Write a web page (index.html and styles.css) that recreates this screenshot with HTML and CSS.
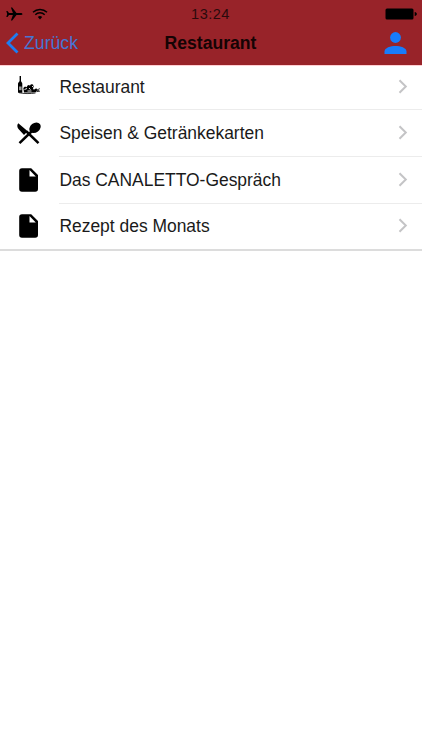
FILE: index.html
```html
<!DOCTYPE html>
<html lang="de">
<head>
  <meta charset="UTF-8" />
  <meta name="viewport" content="width=device-width, initial-scale=1.0"/>
  <title>Restaurant</title>
  <link rel="stylesheet" href="styles.css">
</head>
<body>
  <header>
    <div class="status">
      <div class="status-left">
        <svg class="plane" width="17" height="14" viewBox="0 0 17 14"><path d="M16.500 7c0-.7-.9-1.100-1.900-1.100H10.500L6.200 .6H4.900l2 5.300H3L1.500 4H.3l.9 3-.9 3h1.200L3 8.100h3.900l-2 5.300h1.300l4.300-5.300h4.100c1 0 1.900-.4 1.900-1.100z"/></svg>
        <svg class="wifi" width="16" height="12" viewBox="0 0 16 12"><path d="M1 4.300a10 10 0 0 1 14 0M3.300 6.700a6.800 6.800 0 0 1 9.400 0" fill="none" stroke="#000" stroke-width="1.500"/><path d="M5.800 9a3.400 3.400 0 0 1 4.400 0L8 11.400z"/></svg>
      </div>
      <span class="time">13:24</span>
      <svg class="battery" width="32" height="12" viewBox="0 0 32 12"><rect x=".5" y=".5" width="28" height="11" rx="1.500"/><path d="M29.700 4c1.400.3 2.100 1 2.100 2s-.7 1.700-2.100 2z"/></svg>
    </div>
    <nav class="navbar">
      <a class="back" href="#">
        <svg width="13" height="22" viewBox="0 0 13 22"><path d="M11.500 1.500L2 11l9.500 9.500" fill="none" stroke="#1d7df2" stroke-width="2.800"/></svg>
        <span>Zurück</span>
      </a>
      <h1>Restaurant</h1>
      <a class="user" href="#">
        <svg width="23" height="22" viewBox="0 0 22 22"><circle cx="11" cy="5.500" r="5.400"/><path d="M0 22v-2.500C0 15.800 6 14 11 14s11 1.800 11 5.500V22z"/></svg>
      </a>
    </nav>
  </header>

  <ul class="menu">
    <li>
      <div class="icon">
        <svg class="bottle" width="24" height="20" viewBox="0 0 24 20"><path d="M2.600 0h1.400v4.700c0 1.100 1.300 1.600 1.300 3v9H1V7.700c0-1.400 1.600-1.900 1.600-3z"/><path d="M2 10.500h2.600v3.700H2z" fill="#999"/><path d="M6.300 12l1.700-1.500 1.500.8 1.500-2.300 2 .5 1-1.300 2 .2.800 2.500-1 1 1 1.800 2.500-1.500 1 1.800-1.500 2.200-3 .3H7z"/><path d="M2 16.700c4 1.100 12 1.100 16.500.3M20 13l1 2 1.400-2.800M19.500 15.700l3.500-.6" fill="none" stroke="#000" stroke-width=".8"/><path d="M7.500 13.500l2.500-1M12 12l1.500 1.700M10.500 15h4M15 11l1-1" stroke="#fff" stroke-width=".9"/></svg>
      </div>
      <a href="#">Restaurant <svg class="arrow" width="10" height="15" viewBox="0 0 10 15"><path d="M1.500 1.200l6.300 6.300-6.300 6.300"/></svg></a>
    </li>
    <li>
      <div class="icon">
        <svg width="24" height="23" viewBox="0 0 24 23"><path d="M1.300 1.200C-.3 3 .2 5.500 1.500 6.900l5.500 6 3.700-3.700z"/><path d="M2.500 21.200L15.500 8.500M9.500 9.500l12 11.700" fill="none" stroke="#000" stroke-width="2.500"/><ellipse cx="18" cy="5.800" rx="6.200" ry="4.700" transform="rotate(-38 18 5.800)"/></svg>
      </div>
      <a href="#">Speisen &amp; Getränkekarten <svg class="arrow" width="10" height="15" viewBox="0 0 10 15"><path d="M1.500 1.200l6.300 6.300-6.300 6.300"/></svg></a>
    </li>
    <li>
      <div class="icon">
        <svg width="20" height="24" viewBox="0 0 20 24"><path fill-rule="evenodd" d="M3 .2h9.200L19 7v14a2.800 2.800 0 0 1-2.800 2.800H3A2.800 2.800 0 0 1 .2 21V3A2.800 2.800 0 0 1 3 .2zM10.500 2v6.500h6.300z"/></svg>
      </div>
      <a href="#">Das CANALETTO-Gespräch <svg class="arrow" width="10" height="15" viewBox="0 0 10 15"><path d="M1.500 1.200l6.300 6.300-6.300 6.300"/></svg></a>
    </li>
    <li>
      <div class="icon">
        <svg width="20" height="24" viewBox="0 0 20 24"><path fill-rule="evenodd" d="M3 .2h9.200L19 7v14a2.800 2.800 0 0 1-2.800 2.800H3A2.800 2.800 0 0 1 .2 21V3A2.800 2.800 0 0 1 3 .2zM10.500 2v6.500h6.300z"/></svg>
      </div>
      <a href="#">Rezept des Monats <svg class="arrow" width="10" height="15" viewBox="0 0 10 15"><path d="M1.500 1.200l6.300 6.300-6.300 6.300"/></svg></a>
    </li>
  </ul>
</body>
</html>
```
FILE: styles.css
```css
* {
  box-sizing: border-box;
}

body {
  font-family: "Liberation Sans", Arial, sans-serif;
  margin: 0;
  background: #fff;
  color: #1a1a1a;
}

svg {
  display: block;
}

a {
  color: inherit;
  text-decoration: none;
}

header {
  height: 66px;
  background: #982329;
  border-bottom: 1px solid #ffcfd3;
}

.status {
  display: grid;
  grid-template-columns: 1fr auto 1fr;
  align-items: center;
  height: 22px;
  padding: 5px 5px 0 4px;
}

.status-left {
  display: flex;
  align-items: center;
  gap: 9px;
  padding-left: 2px;
}

.time {
  font-size: 14.5px;
  line-height: 17px;
  letter-spacing: 0.5px;
  margin-top: 1px;
  color: #2a0a0c;
}

.battery {
  justify-self: end;
}

.navbar {
  display: grid;
  grid-template-columns: 1fr auto 1fr;
  align-items: center;
  height: 42px;
  padding: 0 15px 0 6px;
}

.back {
  display: flex;
  align-items: center;
  gap: 5px;
  font-size: 17.7px;
  color: #4676d3;
}

h1 {
  margin: 0 -4px 0 4px;
  font-size: 17.6px;
  color: #150304;
}

.user {
  justify-self: end;
  fill: #187cfb;
}

.menu {
  list-style: none;
  margin: 0;
  padding: 0;
  border-bottom: 2px solid #dcdcdc;
}

.menu li {
  display: flex;
  height: 47px;
  padding-left: 17px;
}

.menu li:first-child {
  height: 44px;
}

.menu li:last-child {
  height: 45px;
}

.icon {
  display: flex;
  align-items: center;
  justify-content: center;
  width: 24px;
  margin-right: 18px;
  padding-bottom: 1px;
}

.bottle {
  margin-bottom: 3px;
}

.menu a {
  flex: 1;
  display: flex;
  align-items: center;
  justify-content: space-between;
  padding: 0 14px 0 0.4px;
  font-size: 17.45px;
  border-bottom: 1px solid #ececec;
}

.menu li:last-child a {
  border-bottom: none;
}

.arrow {
  fill: none;
  stroke: #c4c4c6;
  stroke-width: 2;
  margin-bottom: 2px;
}
```
